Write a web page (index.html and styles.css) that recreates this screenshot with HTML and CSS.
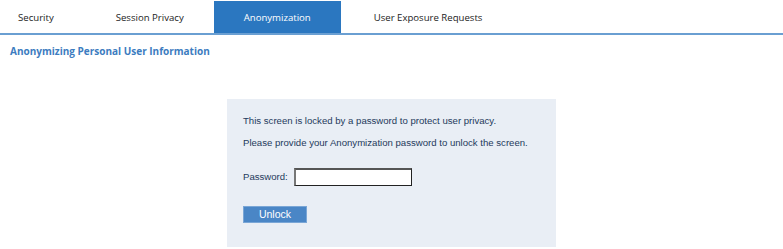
FILE: index.html
```html
<!DOCTYPE html>
<html>
<head>
<meta charset="utf-8">
<link rel="stylesheet" href="styles.css">
</head>
<body>
<nav class="tabs">
  <a class="tab tab-first">Security</a>
  <a class="tab">Session Privacy</a>
  <a class="tab active">Anonymization</a>
  <a class="tab tab-last">User Exposure Requests</a>
</nav>
<h1 class="title">Anonymizing Personal User Information</h1>
<div class="panel-wrap">
  <div class="panel">
    <p class="msg">This screen is locked by a password to protect user privacy.</p>
    <p class="msg">Please provide your Anonymization password to unlock the screen.</p>
    <div class="field">
      <label class="label" for="pw">Password:</label>
      <input class="input" id="pw" type="password">
    </div>
    <button class="btn" type="button">Unlock</button>
  </div>
</div>
</body>
</html>
```
FILE: styles.css
```css
html, body {
  margin: 0;
  padding: 0;
  background: #ffffff;
}
body {
  font-family: "Open Sans", "Liberation Sans", sans-serif;
  width: 783px;
  height: 249px;
  overflow: hidden;
}
.tabs {
  display: flex;
  align-items: stretch;
  height: 32px;
  margin-top: 1px;
  border-bottom: 2px solid #6a9fd2;
}
.tab {
  display: flex;
  align-items: center;
  padding: 0 30px;
  font-size: 9.6px;
  color: #222;
  cursor: pointer;
}
.tab-first {
  padding-left: 18px;
  padding-right: 32px;
}
.tab-last {
  padding-left: 33px;
}
.tab.active {
  background: #2b77c0;
  color: #fff;
}
.title {
  margin: 8px 0 0 10px;
  font-size: 10px;
  font-weight: 700;
  color: #3c7cc0;
  line-height: 16px;
}
.panel-wrap {
  display: flex;
  padding-left: 227px;
  margin-top: 40px;
}
.panel {
  width: 329px;
  height: 148px;
  box-sizing: border-box;
  background: #e9eef5;
  padding: 15px 16px 0 16px;
  font-family: "Liberation Sans", Arial, sans-serif;
  font-size: 9.6px;
  color: #1e3a5c;
}
.msg {
  margin: 0 0 8px 0;
  line-height: 14px;
}
.field {
  display: flex;
  align-items: center;
  gap: 6px;
  margin-top: 18px;
}
.label {
  line-height: 14px;
}
.input {
  width: 118px;
  height: 18px;
  box-sizing: border-box;
  border: 1px solid #222;
  border-top-width: 2px;
  border-left-width: 2px;
  border-top-color: #555;
  border-left-color: #777;
  background: #fff;
  margin: 0;
  padding: 0 2px;
}
.btn {
  display: block;
  margin-top: 20px;
  width: 64px;
  height: 17px;
  padding: 0;
  border: 1px solid #7aa6d6;
  background: #4a86c6;
  color: #fff;
  font-family: "Liberation Sans", Arial, sans-serif;
  font-size: 10.5px;
  line-height: 15px;
}
```
